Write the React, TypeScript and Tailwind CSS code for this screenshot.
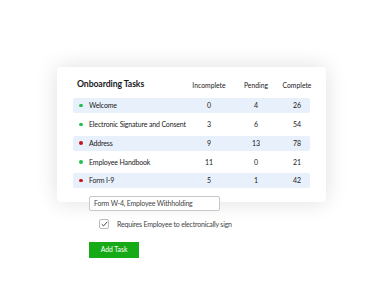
import React from 'react';

const rows = [
  { name: 'Welcome', done: true, incomplete: 0, pending: 4, complete: 26 },
  { name: 'Electronic Signature and Consent', done: true, incomplete: 3, pending: 6, complete: 54 },
  { name: 'Address', done: false, incomplete: 9, pending: 13, complete: 78 },
  { name: 'Employee Handbook', done: true, incomplete: 11, pending: 0, complete: 21 },
  { name: 'Form I-9', done: false, incomplete: 5, pending: 1, complete: 42 },
];

export default function App() {
  return (
    <div className="w-[374px] h-[291px] bg-white pt-[67px] pl-[57px] font-['Lato',sans-serif] text-[#1a1a1a]">
      <div className="w-[269px] h-[135px] bg-white rounded-[4px] shadow-[0_0_22px_rgba(0,0,0,0.13)] px-[16px] pt-[10px]">
        <div className="grid grid-cols-[116px_40px_54px_28px] items-center h-[14px]">
          <div className="pl-[4px] text-[8.7px] font-bold whitespace-nowrap tracking-[-0.1px]">Onboarding Tasks</div>
          <div className="flex justify-center text-[6.8px] whitespace-nowrap pt-[2px]">Incomplete</div>
          <div className="flex justify-center text-[6.8px] whitespace-nowrap pt-[2px]">Pending</div>
          <div className="flex justify-center text-[6.8px] whitespace-nowrap pt-[2px]">Complete</div>
        </div>
        <div className="mt-[7px] flex flex-col gap-[3.75px]">
          {rows.map((r, i) => (
            <div
              key={r.name}
              className={`grid grid-cols-[116px_40px_54px_28px] items-center h-[15px] rounded-[2px] text-[7px] ${i % 2 === 0 ? 'bg-[#e8f0fb]' : ''}`}
            >
              <div className="flex items-center whitespace-nowrap">
                <span className={`shrink-0 ml-[6px] w-[3.5px] h-[3.5px] rounded-full ${r.done ? 'bg-[#1fbf4f]' : 'bg-[#c4141b]'}`} />
                <span className="ml-[6.5px] tracking-[-0.15px]">{r.name}</span>
              </div>
              <div className="flex justify-center">{r.incomplete}</div>
              <div className="flex justify-center">{r.pending}</div>
              <div className="flex justify-center">{r.complete}</div>
            </div>
          ))}
        </div>
      </div>

      <div className="relative z-10 -mt-[6px] ml-[32px] w-[131px] h-[15px] bg-white border border-[#c8c8c8] rounded-[2px] flex items-center pl-[4px] text-[7px] text-[#444] whitespace-nowrap tracking-[-0.2px]">
        Form W-4, Employee Withholding
      </div>

      <div className="mt-[8px] ml-[42px] flex items-center">
        <div className="w-[10px] h-[10px] rounded-[2px] border border-[#bbb] bg-white flex items-center justify-center">
          <svg width="7" height="6" viewBox="0 0 7 6" fill="none">
            <path d="M0.8 3.2 L2.6 4.9 L6.2 0.9" stroke="#333" strokeWidth="0.9" />
          </svg>
        </div>
        <span className="ml-[8px] text-[7px] text-[#444] whitespace-nowrap tracking-[-0.2px]">Requires Employee to electronically sign</span>
      </div>

      <button className="mt-[12px] ml-[32px] w-[50px] h-[16px] bg-[#17aa17] text-white text-[6.8px] flex items-center justify-center">
        Add Task
      </button>
    </div>
  );
}
